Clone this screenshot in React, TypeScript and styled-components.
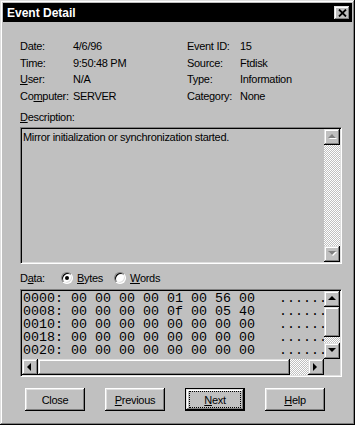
import React from "react";
import styled, { createGlobalStyle, css } from "styled-components";

const GlobalStyle = createGlobalStyle`
  html, body {
    margin: 0;
    padding: 0;
    background: #c0c0c0;
  }
  body {
    font-family: "Liberation Sans", Arial, sans-serif;
    font-size: 11px;
    letter-spacing: -0.3px;
    color: #000;
  }
`;

const raised = css`
  box-shadow: inset -1px -1px #000, inset 1px 1px #dfdfdf,
    inset -2px -2px #808080, inset 2px 2px #fff;
`;

const dither = css`
  background: repeating-conic-gradient(#fff 0 25%, #c0c0c0 0 50%) 0 0 / 2px 2px;
`;

const info = [
  ["Date:", "4/6/96", "Event ID:", "15"],
  ["Time:", "9:50:48 PM", "Source:", "Ftdisk"],
  [<><u>U</u>ser:</>, "N/A", "Type:", "Information"],
  [<>Co<u>m</u>puter:</>, "SERVER", "Category:", "None"],
];

const hexRows = [
  "0000: 00 00 00 00 01 00 56 00   ......",
  "0008: 00 00 00 00 0f 00 05 40   ......",
  "0010: 00 00 00 00 00 00 00 00   ......",
  "0018: 00 00 00 00 00 00 00 00   ......",
  "0020: 00 00 00 00 00 00 00 00   ......",
];

type Dir = "up" | "down" | "left" | "right";

const arrowPaths: Record<Dir, string> = {
  up: "M4 1 L8 5 L0 5 Z",
  down: "M0 1 L8 1 L4 5 Z",
  left: "M5 0 L5 8 L1 4 Z",
  right: "M1 0 L5 4 L1 8 Z",
};

const Arrow = ({ dir, disabled }: { dir: Dir; disabled?: boolean }) => (
  <ArrowButton>
    <svg width="9" height="9" viewBox="0 0 9 9">
      {disabled && (
        <path d={arrowPaths[dir]} fill="#fff" transform="translate(1 1)" />
      )}
      <path d={arrowPaths[dir]} fill={disabled ? "#808080" : "#000"} />
    </svg>
  </ArrowButton>
);

const App = () => (
  <>
    <GlobalStyle />
    <Window>
      <TitleBar>
        <TitleText>Event Detail</TitleText>
        <CloseBox>
          <svg width="9" height="8" viewBox="0 0 9 8">
            <path d="M1 0.5 L8 7.5 M8 0.5 L1 7.5" stroke="#000" strokeWidth="1.8" />
          </svg>
        </CloseBox>
      </TitleBar>

      <Content>
        <InfoGrid>
          {info.map((row, i) => (
            <React.Fragment key={i}>
              {row.map((cell, j) => (
                <span key={j}>{cell}</span>
              ))}
            </React.Fragment>
          ))}
        </InfoGrid>

        <SectionLabel>
          <u>D</u>escription:
        </SectionLabel>
        <Sunken $height={137}>
          <DescText>Mirror initialization or synchronization started.</DescText>
          <VScroll>
            <Arrow dir="up" disabled />
            <Track />
            <Arrow dir="down" disabled />
          </VScroll>
        </Sunken>

        <DataRow>
          <DataLabel>
            D<u>a</u>ta:
          </DataLabel>
          <Radio $checked />
          <RadioText $gap={11}>
            <u>B</u>ytes
          </RadioText>
          <Radio />
          <RadioText>
            <u>W</u>ords
          </RadioText>
        </DataRow>

        <Sunken $height={88} $column>
          <DataTop>
            <HexArea>
              {hexRows.map((r) => (
                <HexLine key={r}>{r}</HexLine>
              ))}
            </HexArea>
            <VScroll>
              <Arrow dir="up" />
              <Thumb $size={30} />
              <Track />
              <Arrow dir="down" />
            </VScroll>
          </DataTop>
          <HScroll>
            <Arrow dir="left" />
            <Thumb $grow />
            <Track $size={18} />
            <Arrow dir="right" />
            <Corner />
          </HScroll>
        </Sunken>

        <ButtonRow>
          <Button>Close</Button>
          <Button>
            <u>P</u>revious
          </Button>
          <Button $default>
            <Focus>
              <u>N</u>ext
            </Focus>
          </Button>
          <Button>
            <u>H</u>elp
          </Button>
        </ButtonRow>
      </Content>
    </Window>
  </>
);

const Window = styled.div`
  box-sizing: border-box;
  width: 355px;
  height: 425px;
  padding: 3px;
  background: #c0c0c0;
  display: flex;
  flex-direction: column;
  ${raised}
`;

const TitleBar = styled.div`
  display: flex;
  align-items: center;
  justify-content: space-between;
  height: 19px;
  padding: 0 2px 0 4px;
  background: #000;
`;

const TitleText = styled.span`
  font-size: 12px;
  font-weight: bold;
  letter-spacing: 0;
  color: #fff;
`;

const CloseBox = styled.div`
  display: flex;
  align-items: center;
  justify-content: center;
  width: 16px;
  height: 14px;
  background: #c0c0c0;
  ${raised}
`;

const Content = styled.div`
  display: flex;
  flex-direction: column;
  padding: 0 10px 0 17px;
`;

const InfoGrid = styled.div`
  display: grid;
  grid-template-columns: 53px 114px 53px 1fr;
  grid-auto-rows: 16.6px;
  align-items: center;
  margin-top: 16px;
  white-space: nowrap;
`;

const SectionLabel = styled.div`
  height: 13px;
  margin-top: 7px;
  line-height: 13px;
`;

const Sunken = styled.div<{ $height: number; $column?: boolean }>`
  display: flex;
  flex-direction: ${(p) => (p.$column ? "column" : "row")};
  height: ${(p) => p.$height}px;
  margin-top: 3px;
  border: 1px solid;
  border-color: #808080 #fff #fff #808080;
  box-shadow: inset 1px 1px #000, inset -1px -1px #dfdfdf;
  padding: 1px;
  box-sizing: border-box;
  background: #c0c0c0;
`;

const DescText = styled.div`
  flex: 1;
  padding: 2px 1px;
  line-height: 13px;
`;

const VScroll = styled.div`
  display: flex;
  flex-direction: column;
  width: 16px;
`;

const HScroll = styled.div`
  display: flex;
  height: 16px;
`;

const ArrowButton = styled.div`
  display: flex;
  align-items: center;
  justify-content: center;
  flex: none;
  width: 16px;
  height: 16px;
  background: #c0c0c0;
  ${raised}
  svg {
    margin: 1px 0 0 1px;
  }
`;

const Track = styled.div<{ $size?: number }>`
  flex: ${(p) => (p.$size ? `0 0 ${p.$size}px` : "1")};
  ${dither}
`;

const Thumb = styled.div<{ $size?: number; $grow?: boolean }>`
  flex: ${(p) => (p.$grow ? "1" : `0 0 ${p.$size}px`)};
  background: #c0c0c0;
  ${raised}
`;

const Corner = styled.div`
  width: 16px;
  height: 16px;
  background: #c0c0c0;
`;

const DataRow = styled.div`
  display: flex;
  align-items: center;
  height: 16px;
  margin-top: 6px;
`;

const DataLabel = styled.span`
  width: 41px;
`;

const Radio = styled.span<{ $checked?: boolean }>`
  position: relative;
  box-sizing: border-box;
  width: 12px;
  height: 12px;
  border-radius: 50%;
  border: 1px solid;
  border-color: #808080 #fff #fff #808080;
  box-shadow: inset 1px 1px #000, inset -1px -1px #dfdfdf;
  background: #fff;

  &::after {
    content: "";
    display: ${(p) => (p.$checked ? "block" : "none")};
    position: absolute;
    left: 3px;
    top: 3px;
    width: 4px;
    height: 4px;
    border-radius: 50%;
    background: #000;
  }
`;

const RadioText = styled.span<{ $gap?: number }>`
  margin: 0 ${(p) => p.$gap ?? 0}px 0 4px;
`;

const DataTop = styled.div`
  display: flex;
  flex: 1;
  min-height: 0;
`;

const HexArea = styled.div`
  flex: 1;
  overflow: hidden;
  padding: 1px 0 0 1px;
`;

const HexLine = styled.div`
  height: 13px;
  font-family: "Liberation Mono", "Courier New", monospace;
  font-size: 13.33px;
  letter-spacing: 0;
  line-height: 13px;
  white-space: pre;
`;

const ButtonRow = styled.div`
  display: flex;
  gap: 20px;
  margin-top: 11px;
  padding-left: 5px;
`;

const Button = styled.div<{ $default?: boolean }>`
  box-sizing: border-box;
  display: flex;
  align-items: center;
  justify-content: center;
  width: 60px;
  height: 23px;
  background: #c0c0c0;
  ${(p) =>
    p.$default
      ? css`
          border: 1px solid #000;
          ${raised}
        `
      : css`
          box-shadow: inset -1px -1px #000, inset 1px 1px #fff,
            inset -2px -2px #808080, inset 2px 2px #dfdfdf;
        `}
`;

const Focus = styled.span`
  box-sizing: border-box;
  display: flex;
  align-items: center;
  justify-content: center;
  width: 50px;
  height: 15px;
  outline: 1px dotted #000;
`;

export default App;
